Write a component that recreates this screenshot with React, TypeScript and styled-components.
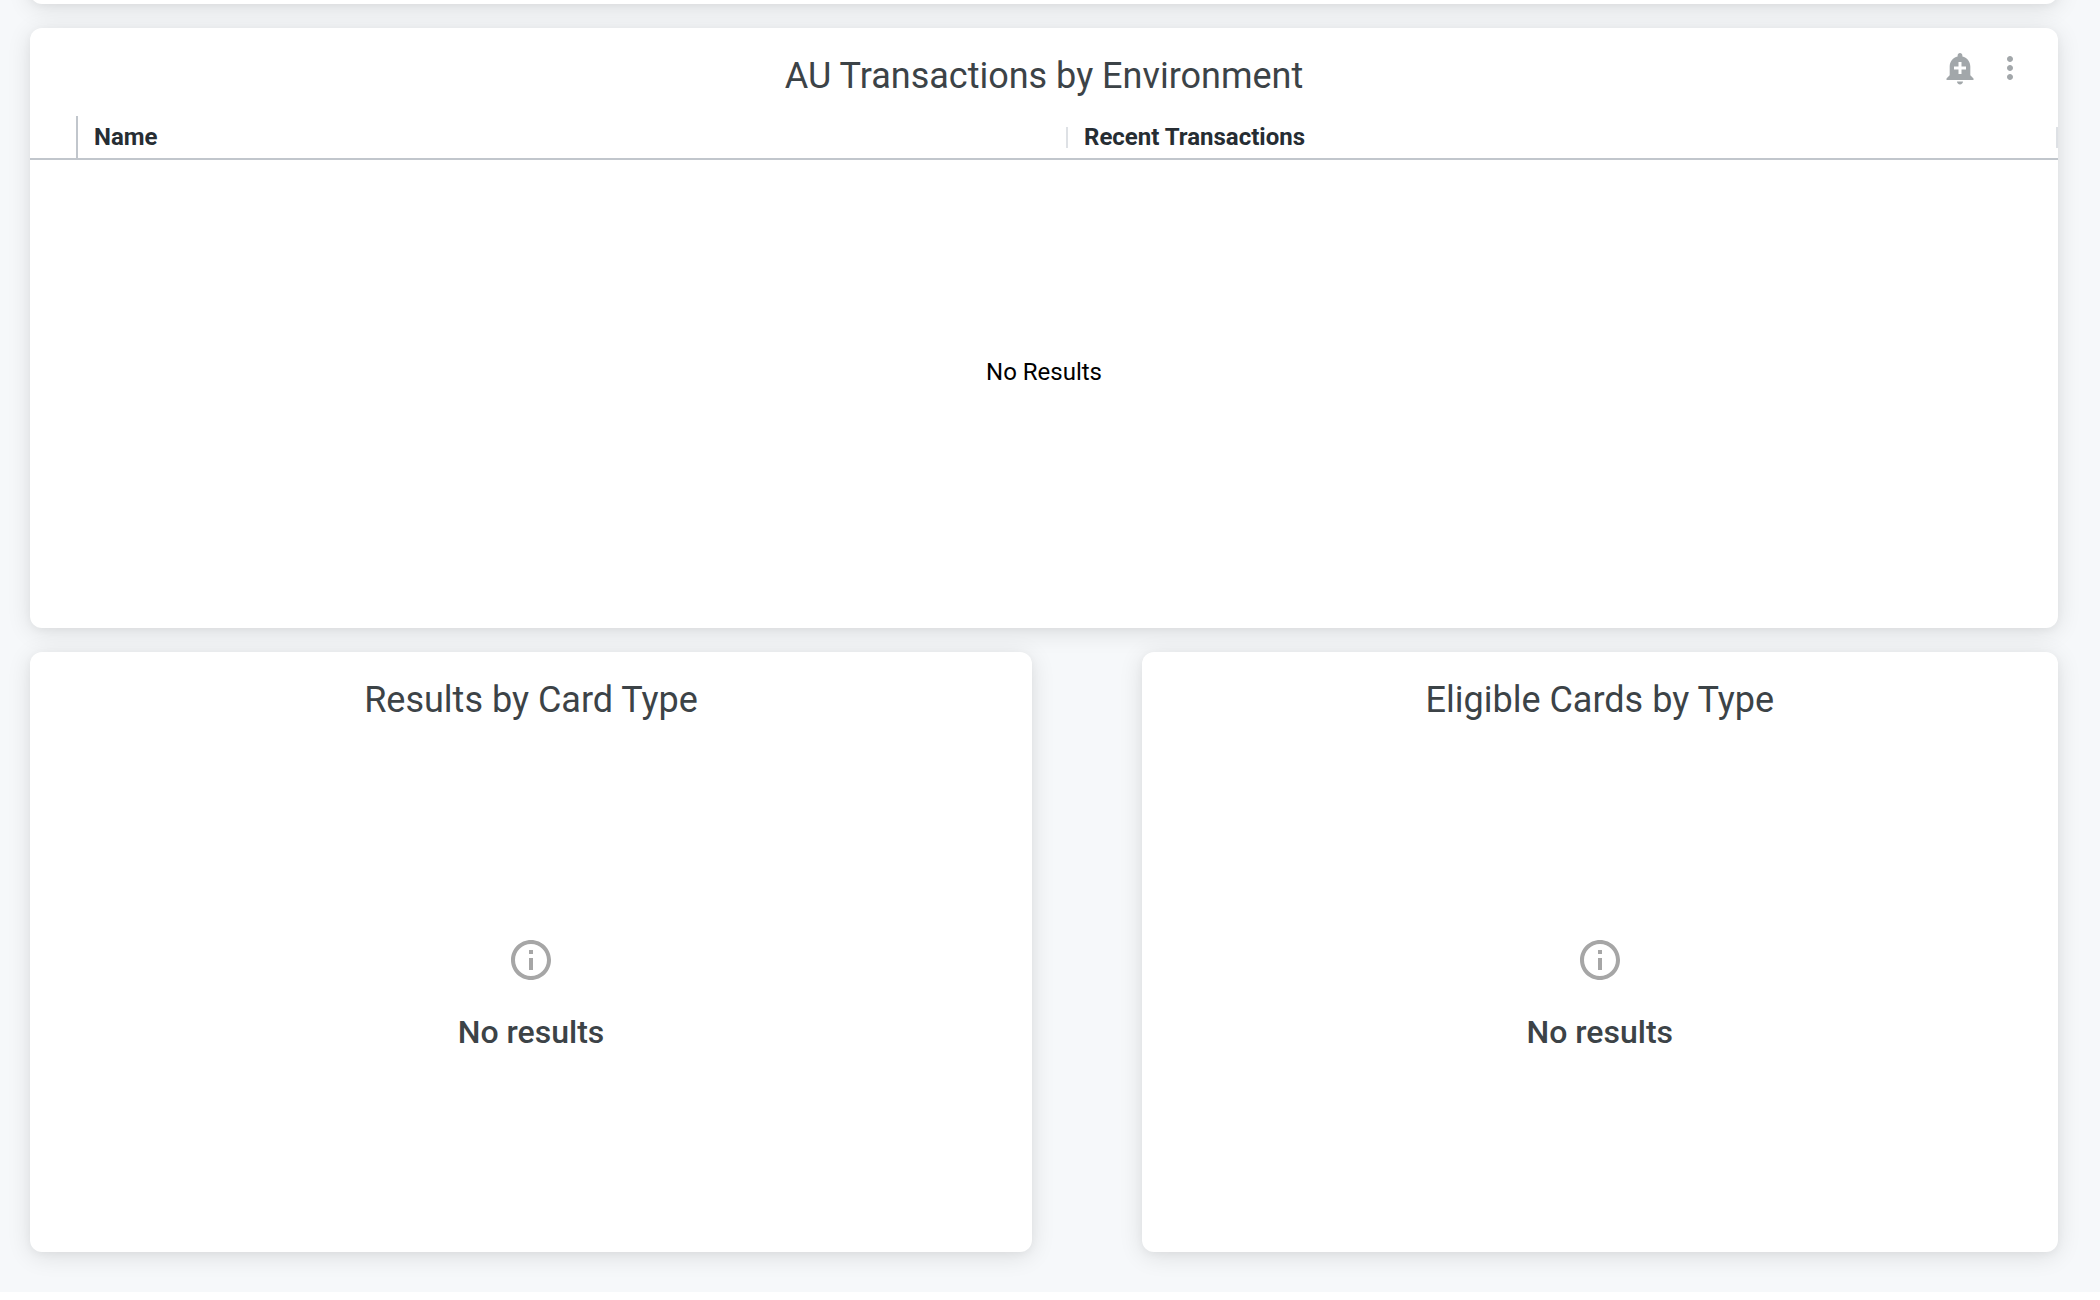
import React from "react";
import styled, { createGlobalStyle, css } from "styled-components";

const GlobalStyle = createGlobalStyle`
  *, *::before, *::after { box-sizing: border-box; }
  html { background: #ffffff; }
  body {
    margin: 0;
    font-family: Roboto, "Liberation Sans", sans-serif;
    color: #3c4347;
  }
`;

const surface = css`
  background: #ffffff;
  border-radius: 12px;
  box-shadow: 0 4px 24px rgba(0, 0, 0, 0.11), 0 2px 8px rgba(0, 0, 0, 0.04);
`;

const Page = styled.main`
  background: #f6f8fa;
  padding: 0 42px 40px 30px;
  overflow: hidden;
`;

const Grid = styled.div`
  display: grid;
  grid-template-columns: repeat(24, minmax(0, 1fr));
  gap: 24px;
`;

const Tile = styled.section<{ $start: number; $span: number }>`
  ${surface}
  grid-column: ${(p) => p.$start} / span ${(p) => p.$span};
  min-height: 600px;
  display: flex;
  flex-direction: column;
  position: relative;
`;

const ScrolledTile = styled.div`
  ${surface}
  grid-column: 1 / -1;
  height: 44px;
  margin-top: -40px;
`;

const Title = styled.h2`
  margin: 0;
  padding: 24px 32px 16px;
  font-size: 36px;
  line-height: 48px;
  font-weight: 400;
  text-align: center;
`;

const Actions = styled.div`
  position: absolute;
  top: 20px;
  right: 28px;
  display: flex;
  gap: 10px;
`;

const IconButton = styled.button`
  display: grid;
  place-items: center;
  width: 40px;
  height: 40px;
  padding: 0;
  border: 0;
  background: none;
  color: #a2a7aa;
  cursor: pointer;
`;

const Table = styled.table`
  width: 100%;
  table-layout: fixed;
  border-collapse: separate;
  border-spacing: 0;
  color: #262d33;
`;

const RowNumberHead = styled.td`
  width: 48px;
  height: 44px;
  padding: 0;
  border-right: 2px solid #c1c6cc;
  border-bottom: 2px solid #c1c6cc;
`;

const HeadCell = styled.th`
  height: 44px;
  padding: 0;
  border-bottom: 2px solid #c1c6cc;
  text-align: left;
`;

const HeadContent = styled.div`
  display: flex;
  align-items: center;
  justify-content: space-between;
  padding-left: 16px;
  font-size: 24px;
  line-height: 42px;
  font-weight: 700;

  &::after {
    content: "";
    width: 2px;
    height: 21px;
    background: #dee1e5;
  }
`;

const TableEmpty = styled.div`
  flex: 1;
  display: flex;
  align-items: center;
  justify-content: center;
  padding-bottom: 44px;
  font-size: 24px;
  line-height: 28px;
  color: #000000;
`;

const ChartEmpty = styled.div`
  flex: 1;
  display: flex;
  flex-direction: column;
  align-items: center;
  justify-content: center;
  gap: 28px;
  padding-bottom: 4px;
`;

const InfoIcon = styled.svg`
  width: 48px;
  height: 48px;
  fill: #a6a6a6;
`;

const EmptyLabel = styled.p`
  margin: 0;
  font-size: 32px;
  line-height: 40px;
  font-weight: 500;
`;

const columns = ["Name", "Recent Transactions"];

function BellPlusIcon() {
  return (
    <svg width="36" height="36" viewBox="0 0 24 24" fill="currentColor" aria-hidden="true">
      <path d="M10.01 21.01c0 1.1.89 1.99 1.99 1.99s1.99-.89 1.99-1.99h-3.98zm8.87-4.19V11c0-3.25-2.25-5.97-5.29-6.69v-.72C13.59 2.71 12.88 2 12 2s-1.59.71-1.59 1.59v.72C7.37 5.03 5.12 7.75 5.12 11v5.82L3 18.94V20h18v-1.06l-2.12-2.12zM16 13.01h-3v3h-2v-3H8V11h3V8h2v3h3v2.01z" />
    </svg>
  );
}

function MoreIcon() {
  return (
    <svg width="36" height="36" viewBox="0 0 24 24" fill="currentColor" aria-hidden="true">
      <path d="M12 8c1.1 0 2-.9 2-2s-.9-2-2-2-2 .9-2 2 .9 2 2 2zm0 2c-1.1 0-2 .9-2 2s.9 2 2 2 2-.9 2-2-.9-2-2-2zm0 6c-1.1 0-2 .9-2 2s.9 2 2 2 2-.9 2-2-.9-2-2-2z" />
    </svg>
  );
}

function EmptyChartTile({ title, start, span }: { title: string; start: number; span: number }) {
  return (
    <Tile $start={start} $span={span}>
      <Title>{title}</Title>
      <ChartEmpty>
        <InfoIcon viewBox="0 0 24 24" aria-hidden="true">
          <path d="M11 7h2v2h-2zm0 4h2v6h-2zm1-9C6.48 2 2 6.48 2 12s4.48 10 10 10 10-4.48 10-10S17.52 2 12 2zm0 18c-4.41 0-8-3.59-8-8s3.59-8 8-8 8 3.59 8 8-3.59 8-8 8z" />
        </InfoIcon>
        <EmptyLabel>No results</EmptyLabel>
      </ChartEmpty>
    </Tile>
  );
}

export default function App() {
  return (
    <>
      <GlobalStyle />
      <Page>
        <Grid>
          <ScrolledTile />
          <Tile $start={1} $span={24}>
            <Title>AU Transactions by Environment</Title>
            <Actions>
              <IconButton type="button" aria-label="Create alert">
                <BellPlusIcon />
              </IconButton>
              <IconButton type="button" aria-label="Tile actions">
                <MoreIcon />
              </IconButton>
            </Actions>
            <Table>
              <thead>
                <tr>
                  <RowNumberHead />
                  {columns.map((name) => (
                    <HeadCell key={name} scope="col">
                      <HeadContent>{name}</HeadContent>
                    </HeadCell>
                  ))}
                </tr>
              </thead>
            </Table>
            <TableEmpty>No Results</TableEmpty>
          </Tile>
          <EmptyChartTile title="Results by Card Type" start={1} span={12} />
          <EmptyChartTile title="Eligible Cards by Type" start={14} span={11} />
        </Grid>
      </Page>
    </>
  );
}
